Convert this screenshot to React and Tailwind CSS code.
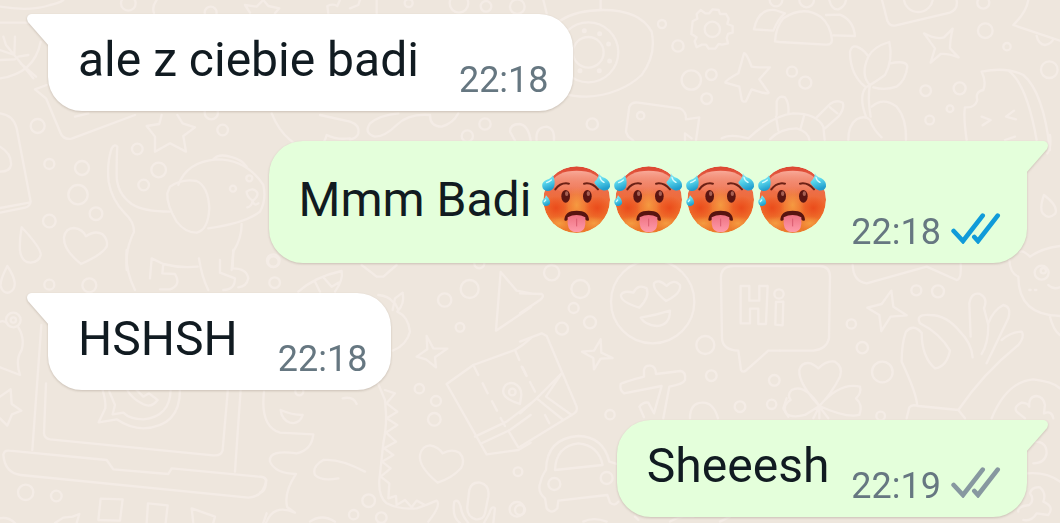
import React, { useId } from 'react';
import clsx from 'clsx';

const messages = [
  { id: 1, text: 'ale z ciebie badi', time: '22:18' },
  { id: 2, text: 'Mmm Badi', emojis: 4, time: '22:18', mine: true, status: 'read' },
  { id: 3, text: 'HSHSH', time: '22:18' },
  { id: 4, text: 'Sheeesh', time: '22:19', mine: true, status: 'delivered' },
];

// Each group is drawn at three times its size from its own corner.
// circles: [cx, cy, r]
const doodles = [
  {
    x: 0,
    y: 0,
    circles: [
      [385, 10, 22], [632, 38, 18], [113, 378, 21], [148, 492, 15], [246, 504, 21],
      [234, 584, 29], [288, 641, 19], [148, 663, 19], [476, 510, 22], [431, 555, 16],
      [412, 447, 16], [668, 390, 16], [634, 338, 20], [699, 566, 9], [748, 535, 9], [820, 782, 19],
    ],
    paths: [
      'M0 20Q90 35 150 15Q180 8 190 0M0 68H90',
      'M122 125C110 185 70 225 0 235M10 110L18 135L100 235M45 110L43 165L0 150M85 165L55 170M62 190L108 230M0 180L45 178',
      'M140 255L105 268L138 295L182 400Q190 420 215 416L405 345M225 350L265 340M470 0Q455 20 462 40M735 15L770 20L790 0L805 18L838 25L825 40M735 15L750 38M985 40L982 18Q1000 10 1012 18L1020 0',
      'M485 345L478 372L440 378L465 410L465 455L510 430L558 455L550 408L585 382L548 370L532 345',
      'M0 340Q40 345 50 385L92 605Q90 620 75 623L0 638M0 624L88 608M0 440Q35 460 33 495Q30 515 0 515',
      'M65 682Q58 720 60 752Q65 788 92 788Q118 785 122 765Q124 745 65 682Z',
      'M243 792Q190 750 192 712Q197 684 222 684Q248 687 258 709Q285 690 308 703Q325 720 320 740Q305 765 243 792Z',
      'M510 635Q430 635 395 612Q348 578 350 520Q350 465 352 440Q345 430 335 445Q320 490 326 545Q335 600 375 640Q402 665 402 695Q375 750 380 810',
      'M535 555Q560 485 650 478Q740 478 790 555Q800 600 780 635Q735 670 625 685M640 478Q655 460 690 470Q725 478 740 500',
      'M510 560Q545 535 590 543Q625 560 628 625Q625 690 590 698Q555 698 530 665Q500 615 502 580Z',
      'M725 672Q725 715 700 755L695 810',
      'M740 575Q760 560 772 578Q775 592 758 602Q755 620 742 622M758 602Q762 620 775 610M740 575Q740 590 758 602',
    ],
  },
  {
    x: 350,
    y: 0,
    circles: [
      [176, 9, 12], [327, 10, 28], [408, 19, 16], [502, 20, 22], [715, 157, 90], [715, 157, 46],
      [936, 72, 12], [984, 138, 17], [1024, 240, 29],
      [405, 372, 17], [352, 408, 17], [727, 372, 17], [872, 347, 11],
      [703, 92, 4], [749, 101, 4], [776, 132, 4], [779, 183, 4], [748, 212, 4], [690, 212, 4],
    ],
    paths: [
      'M580 0L590 40M752 0V28M630 62Q680 30 760 30Q870 30 905 95Q920 165 875 225Q810 285 710 290Q670 290 640 280',
      'M0 25L25 15L30 0M80 0V40',
      'M-235 340Q-215 390 -180 420Q-130 465 -90 440Q-75 425 -70 405Q-40 420 0 415M0 365Q30 375 25 400Q20 415 0 418M0 365L-90 345M145 340Q90 345 60 370Q40 400 75 410Q105 410 140 375Q175 340 240 345Q240 380 275 380Q310 370 325 340',
      'M495 422L480 395Q480 372 508 372Q535 375 542 422M560 422Q555 382 590 380Q615 385 612 422',
      'M850 422L835 410L828 395L838 320Q845 305 865 308L990 325Q1010 335 1008 358L1048 352L1038 422M1005 420V400L1025 415',
    ],
  },
  {
    x: 700,
    y: 0,
    circles: [
      [37, 88, 23], [34, 224, 16], [20, 296, 16], [276, 215, 15], [316, 248, 18], [228, 0, 19],
      [320, 0, 22], [655, -8, 44], [850, 8, 18], [856, 92, 22], [921, 140, 11], [1048, 209, 25],
      [677, 272, 16], [779, 265, 18], [750, 326, 10], [689, 360, 13],
    ],
    paths: [
      'M-24 82L-22 64L-8 56L-10 42L2 30L16 40L28 40L38 28L56 30L60 42L78 42L86 56L82 72L98 78V98L84 102L80 114L84 130L66 134L56 132L46 146L26 146L18 134L6 134L-10 142L-16 124L-10 112L-26 102Z',
      'M225 124Q228 80 250 55Q310 15 362 50Q392 75 396 120Q395 135 378 134L238 126ZM162 88Q175 25 225 30L255 40Q235 55 220 92ZM378 45L420 44Q460 60 465 108L400 106',
      'M388 0Q395 30 415 28Q435 20 438 0M546 0L562 62Q570 80 588 76L750 38Q775 28 770 0',
      'M132 160Q138 157 155 200Q165 203 210 202L178 238L206 278Q205 285 155 268L138 304Q128 308 125 298L118 260L76 248Q78 240 115 220Z',
      'M672 100Q708 120 732 112L758 86Q750 120 750 145L776 172Q745 160 722 162L692 188L705 145Z',
      'M498 262Q450 225 450 155Q455 135 470 140Q490 148 502 165M510 255Q480 225 505 170Q520 140 568 126Q580 180 555 225Q520 250 498 262Q475 290 498 350M510 255Q502 290 512 350M570 190Q620 180 622 200Q618 240 590 260Q555 272 520 262',
      'M515 320Q550 290 590 320Q620 355 618 420M445 420Q445 375 470 358Q495 345 510 360Q520 390 545 412',
      'M65 415Q90 400 145 415Q220 345 280 340Q350 340 370 380L374 420M210 418Q240 385 290 385Q325 395 328 420M228 350L235 392M312 348L302 385M230 345L230 305Q235 285 255 292Q268 310 265 340M350 352L390 312Q410 298 428 308Q435 325 415 350L375 385M390 322L412 340',
      'M845 215Q920 200 970 225Q1030 275 1050 450M925 212Q980 250 1010 420M845 215Q860 245 850 270Q825 275 832 300Q825 325 795 322Q790 350 800 420M845 350L872 360L848 376M942 332L918 350L948 358M915 420L945 410',
      'M985 0Q980 35 940 75L1080 122M1010 108Q1015 132 1035 135Q1058 130 1060 115',
    ],
  },
  {
    x: 0,
    y: 250,
    circles: [
      [148, 104, 15], [268, 106, 21], [40, 210, 22], [40, 210, 8], [77, 727, 23], [169, 738, 16],
    ],
    paths: [
      'M22 48Q0 90 2 108Q8 130 26 128Q46 120 44 98Q42 78 22 48Z',
      'M0 215Q12 210 22 220M55 232Q75 265 65 300Q45 330 60 375L0 352',
      'M0 440L32 418L35 462L64 482L36 493L22 527L0 505',
      'M124 225L97 600M138 400L132 550Q133 565 150 568L640 616Q665 618 668 600L684 415M722 420L705 665',
      'M28 602Q12 600 10 615Q15 670 62 675L745 743Q792 740 799 690Q795 680 775 680L515 655L505 672L340 658L320 630Z',
      'M308 420Q318 455 316 475L296 517L350 508Q390 535 430 535Q540 530 540 420M328 425L345 465L338 493L370 488Q390 508 430 508Q510 500 512 420M382 420Q395 445 430 463Q455 475 473 450L447 430L430 440L410 420',
      'M380 0Q375 60 405 120M450 85L455 25L490 42L487 70L525 72Q545 105 510 118H480M490 42Q540 55 593 50M660 30V68L705 85Q705 120 670 120M597 25Q605 80 625 120M700 0L698 55Q740 55 745 85Q740 110 715 112',
      'M302 746L368 748L360 812L295 810ZM440 819L444 760L503 766L497 819M165 819L190 803L218 800L238 792L230 819M580 819L575 775L645 800L640 819M0 805Q25 800 45 819M790 819L800 790',
    ],
  },
  {
    x: 260,
    y: 260,
    circles: [
      [40, 5, 16], [44, 68, 16], [118, 394, 12], [554, 120, 20], [629, 87, 27], [600, 202, 13],
      [478, 386, 14], [528, 423, 15], [523, 478, 19], [326, 722, 19], [281, 764, 14],
      [364, 773, 16], [774, 635, 13], [771, 748, 22], [757, 396, 10], [658, 10, 15],
    ],
    paths: [
      'M115 95Q165 50 245 33Q250 60 225 95M165 65L180 95M190 52L215 80L235 68M305 15L350 50H370L410 15',
      'M355 105Q385 108 398 125M398 150L405 115L428 98Q435 130 412 155Q445 170 450 215Q440 255 398 272M405 130L415 150',
      'M500 228L520 265L562 266L525 292L528 322L498 298L470 290L502 268Z',
      'M722 36L770 92L812 100M722 36L708 212L812 142',
      'M560 372L640 315L765 270Q790 255 812 235M560 372L680 583L775 570L812 548M645 530L740 485L812 430M665 550L750 510L812 465',
      'M640 315L655 345M668 370L683 400M696 424L711 452M722 474L735 498M745 512L775 562M765 270L778 300M788 322L800 348',
      'M780 432Q725 415 730 390Q735 365 762 370Q785 380 784 405Z',
      'M533 668Q475 620 480 585Q485 558 510 556Q535 560 548 580Q575 565 598 578Q618 600 603 625Q575 655 533 668Z',
      'M352 365L375 420L378 460Q380 500 370 550L358 660Q355 710 380 730Q420 750 470 745Q500 735 530 722Q545 735 505 785M375 390L405 400L380 430L412 455L380 475L412 495L378 518L408 545L372 565L400 585L366 605L392 625L362 650L388 670L385 715L408 708L410 735L435 720L455 742L470 722L495 735',
      'M248 415Q280 408 290 432M62 450Q95 465 128 465Q118 495 90 488Q65 480 62 450ZM12 395Q0 500 60 518L160 523Q155 570 110 580Q25 568 30 605Q45 640 108 642Q70 700 82 742L105 758Q40 730 18 789',
      'M315 635Q240 595 190 600Q155 620 165 645Q185 665 235 655M0 650Q20 650 18 670Q15 695 0 698M150 785Q185 760 225 785',
      'M622 740L628 690Q635 665 660 668Q690 675 685 710L675 760Q670 780 648 778Q620 770 622 740ZM583 725Q595 715 602 740Q605 765 625 789M583 725Q575 770 600 789M705 745Q695 735 688 760L672 789M705 745L700 789',
    ],
  },
  {
    x: 520,
    y: 260,
    circles: [
      [95, 38, 23], [181, 87, 27], [161, 144, 15], [210, 187, 18], [126, 206, 18], [398, 125, 125],
      [556, 255, 27], [574, 347, 16], [763, 361, 16], [660, 440, 16], [755, 433, 14],
      [270, 464, 14], [103, 672, 18], [260, 654, 18], [0, 750, 15], [777, 102, 14],
    ],
    paths: [
      'M0 100L65 102Q75 108 60 120L0 160',
      'M358 143Q300 125 303 105Q310 90 340 98Q355 70 380 85Q390 110 358 143ZM438 123Q398 90 402 70Q415 55 440 78Q462 55 480 75Q485 100 438 123ZM362 173Q410 165 450 152Q450 195 410 198Q375 195 362 173Z',
      'M242 238L244 278L278 294L242 296L222 328L220 294L186 275L222 272Z',
      'M0 245L65 220L80 228L170 440Q175 455 155 465L0 560M125 340L50 415L0 460M125 340L78 410L155 465M50 415L130 480M5 320L18 345M30 366L45 395M75 465L88 490',
      'M312 400Q298 390 302 372Q315 365 372 350V330Q375 315 392 317Q408 320 408 342L482 333Q498 335 495 360Q490 372 448 380L430 475M312 400L425 378L402 460L385 428Q370 425 358 440L372 472',
      'M510 475Q510 430 545 428Q580 425 594 475M800 415L790 445L805 470',
      'M62 665Q65 650 78 630Q80 535 175 528Q250 530 268 605L290 612M105 630Q108 558 175 550Q235 555 248 615ZM62 665Q50 695 75 715L80 745Q95 765 112 745L115 722L262 705L270 728Q285 740 295 725M190 785Q220 770 260 785M345 770L355 780M450 785Q480 765 520 770M600 785L630 770',
      'M780 18H640Q600 18 603 60L606 235Q608 270 655 272L663 330Q668 340 680 330L745 272H780',
      'M662 78H688V122H718V78H743L738 192H715V146H690V190H662ZM768 126L790 125L788 196L766 194Z',
    ],
  },
  {
    x: 780,
    y: 260,
    circles: [
      [409, 91, 15], [474, 94, 18], [214, 192, 14], [247, 263, 17], [307, 336, 31], [302, 468, 13], [785, 38, 21], [790, 32, 8],
    ],
    paths: [
      'M0 18H120Q150 20 150 50L147 235Q140 268 100 272H0',
      'M218 15Q220 65 260 70L440 20L530 60Q545 58 542 12',
      'M334 92L340 140L380 166L332 170L304 213L298 165L262 143L305 132Z',
      'M412 438Q410 400 365 305Q365 250 378 215Q400 190 425 218Q425 290 465 325Q500 320 510 272Q480 220 420 190Q405 162 450 165Q500 165 540 215Q575 250 578 292M572 230L568 130Q575 95 600 102Q625 115 612 145L625 195Q625 250 605 282M625 190Q640 150 670 135Q695 140 685 175L620 310M665 240Q695 215 725 215Q735 230 715 255Q610 340 535 450M380 475L388 442Q395 432 415 438L535 450L555 475',
      'M118 438Q55 370 58 330Q65 305 92 310Q110 320 115 325Q140 300 165 305Q190 320 180 350Q155 400 118 438ZM118 438Q75 370 35 390Q20 405 32 420Q5 435 18 460Q35 475 75 465L118 438ZM118 438Q180 365 240 380Q245 400 228 415Q250 435 238 465Q200 475 118 438ZM118 438V475M100 475L118 440L145 475',
      'M688 0Q690 40 715 50Q715 165 840 168M748 90H752M765 90H769M805 75Q820 90 840 82M810 170Q820 210 840 225M635 475Q680 365 760 358Q820 365 840 385',
      'M735 475L710 455Q700 440 725 428Q745 430 748 440Q745 410 770 408Q790 410 795 435L792 460Q815 450 820 475M765 545Q800 545 800 580Q795 610 760 610M742 640Q800 635 840 665M715 755Q710 740 748 735Q765 720 750 700Q755 680 780 682Q800 700 790 725Q825 740 805 765L770 760Q755 785 730 780',
    ],
  },
  {
    x: 960,
    y: 0,
    paths: [
      'M252 585Q238 625 248 640Q265 660 285 642Q298 620 252 585Z',
      'M210 770Q190 750 180 755M210 770Q245 745 300 738M270 405Q275 440 262 460',
    ],
  },
];

const Wallpaper = () => (
  <svg
    className="absolute inset-0 w-full h-full"
    viewBox="0 0 1060 523"
    preserveAspectRatio="xMidYMid slice"
    fill="none"
    stroke="#f4ece6"
    strokeWidth="7"
    strokeLinecap="round"
    strokeLinejoin="round"
    aria-hidden="true"
  >
    {doodles.map((group, i) => (
      <g key={i} transform={`translate(${group.x} ${group.y}) scale(0.3333)`}>
        {group.circles?.map(([cx, cy, r], j) => (
          <circle key={j} cx={cx} cy={cy} r={r} />
        ))}
        {group.paths.map((d) => (
          <path key={d} d={d} />
        ))}
      </g>
    ))}
  </svg>
);

const HotFace = () => {
  const id = useId();
  const drop = `url(#${id}drop)`;

  return (
    <svg className="size-[72px]" viewBox="33 42 216 216" role="img" aria-label="🥵">
      <defs>
        <linearGradient id={`${id}face`} x1="0" y1="0" x2="0" y2="1">
          <stop offset="0" stopColor="#dc4632" />
          <stop offset="0.3" stopColor="#ec6f50" />
          <stop offset="0.6" stopColor="#f06a2c" />
          <stop offset="1" stopColor="#ec7c2c" />
        </linearGradient>
        <radialGradient id={`${id}cheek`}>
          <stop offset="0" stopColor="#ea4c1c" />
          <stop offset="1" stopColor="#ea4c1c" stopOpacity="0" />
        </radialGradient>
        <radialGradient id={`${id}glow`}>
          <stop offset="0" stopColor="#f6a244" stopOpacity="0.85" />
          <stop offset="1" stopColor="#f6a244" stopOpacity="0" />
        </radialGradient>
        <linearGradient id={`${id}shine`} x1="0" y1="0" x2="0" y2="1">
          <stop offset="0" stopColor="#ffc0b0" stopOpacity="0.8" />
          <stop offset="1" stopColor="#ffb090" stopOpacity="0" />
        </linearGradient>
        <linearGradient id={`${id}drop`} x1="0" y1="0" x2="0.3" y2="1">
          <stop offset="0" stopColor="#9beef5" />
          <stop offset="0.5" stopColor="#58d6ec" />
          <stop offset="1" stopColor="#229fce" />
        </linearGradient>
        <linearGradient id={`${id}tongue`} x1="0" y1="0" x2="0" y2="1">
          <stop offset="0" stopColor="#ee7181" />
          <stop offset="1" stopColor="#ff9cab" />
        </linearGradient>
        <clipPath id={`${id}clip`}>
          <circle cx="140" cy="149" r="100" />
        </clipPath>
      </defs>
      <g clipPath={`url(#${id}clip)`}>
        <circle cx="140" cy="149" r="100" fill={`url(#${id}face)`} />
        <ellipse cx="140" cy="165" rx="38" ry="54" fill={`url(#${id}glow)`} />
        <ellipse cx="88" cy="220" rx="38" ry="22" fill={`url(#${id}glow)`} />
        <ellipse cx="192" cy="220" rx="38" ry="22" fill={`url(#${id}glow)`} />
        <ellipse cx="78" cy="174" rx="38" ry="36" fill={`url(#${id}cheek)`} />
        <ellipse cx="202" cy="174" rx="38" ry="36" fill={`url(#${id}cheek)`} />
        <ellipse cx="140" cy="98" rx="72" ry="36" fill={`url(#${id}shine)`} />
      </g>
      <path d="M76 118Q92 96 117 101M162 101Q185 96 204 118" fill="none" stroke="#6c2115" strokeWidth="6" strokeLinecap="round" />
      <ellipse cx="107" cy="139" rx="13" ry="19" fill="#5a1612" />
      <ellipse cx="172" cy="139" rx="13" ry="19" fill="#5a1612" />
      <ellipse cx="110" cy="131" rx="5" ry="7" fill="#a66054" />
      <ellipse cx="175" cy="131" rx="5" ry="7" fill="#a66054" />
      <path d="M103 210Q104 182 140 182Q176 182 177 210Q173 216 165 208Q140 190 115 208Q107 216 103 210Z" fill="#581410" />
      <path d="M113 202Q140 188 166 202V222Q164 247 140 247Q116 247 113 222Z" fill={`url(#${id}tongue)`} />
      <path d="M140 207V228" stroke="#da5c70" strokeWidth="3" strokeLinecap="round" />
      <path d="M69 76Q78 98 71 113Q62 126 48 122Q34 117 37 101Q43 90 57 87Q65 83 69 76Z" fill={drop} />
      <path d="M48 136Q62 150 60 161Q54 171 43 167Q34 160 38 150Q46 145 48 136Z" fill={drop} />
      <path d="M207 70Q210 80 225 84Q242 94 240 110Q234 124 218 121Q204 116 193 98L195 94Q205 86 207 70Z" fill={drop} />
      <path d="M64 90Q57 96 50 98M210 82Q212 92 222 97M47 150L43 155" fill="none" stroke="#d8fbfc" strokeWidth="4" strokeLinecap="round" />
    </svg>
  );
};

const Ticks = ({ status }) => (
  <svg
    className={clsx('w-[50px] h-[31px] mb-[9px]', status === 'read' ? 'text-[#109bd9]' : 'text-[#8798a0]')}
    viewBox="336 249 150 93"
    fill="none"
    stroke="currentColor"
    strokeWidth="14"
    role="img"
    aria-label={status}
  >
    <path d="M344 303L372 333L431 257M406 321L417 333L476 257" strokeLinejoin="miter" strokeLinecap="round" />
  </svg>
);

const Tail = ({ mine }) => (
  <svg
    className={clsx('absolute top-0 w-[22px] h-[32px]', mine ? '-right-[21px] -scale-x-100 text-[#e4ffdb]' : '-left-[21px] text-white')}
    viewBox="0 0 22 32"
    fill="currentColor"
    aria-hidden="true"
  >
    <path d="M22 0H5Q1 0 0 4Q0 6 1 8L22 32Z" />
  </svg>
);

const Message = ({ message }) => {
  const { text, emojis = 0, time, mine, status } = message;

  return (
    <li
      className={clsx(
        'relative flex items-end rounded-[34px] pl-[30px] pb-[10px] [filter:drop-shadow(0_1px_1px_rgba(60,40,20,0.2))]',
        mine ? 'self-end rounded-tr-none bg-[#e4ffdb] gap-[22px] pr-[26px]' : 'self-start rounded-tl-none bg-white gap-[40px] pr-[24px]',
      )}
    >
      <Tail mine={mine} />
      <p className={clsx('flex items-center text-[48px] leading-[56px] text-[#111b21]', emojis ? 'pt-[23px] pb-[17px] gap-[10px]' : 'pt-[18px] pb-[13px]')}>
        {text}
        {emojis > 0 && (
          <span className="flex">
            {Array.from({ length: emojis }, (_, i) => (
              <HotFace key={i} />
            ))}
          </span>
        )}
      </p>
      <div className="flex items-end gap-[10px]">
        <time className="text-[36px] leading-[42px] text-[#667781]">{time}</time>
        {status && <Ticks status={status} />}
      </div>
    </li>
  );
};

const App = () => (
  <main className="relative min-h-screen overflow-hidden bg-[#eee6dd] font-['Roboto',sans-serif]">
    <Wallpaper />
    <ul className="relative flex flex-col gap-[30px] pt-[14px] pl-[48px] pr-[33px]">
      {messages.map((message) => (
        <Message key={message.id} message={message} />
      ))}
    </ul>
  </main>
);

export default App;
